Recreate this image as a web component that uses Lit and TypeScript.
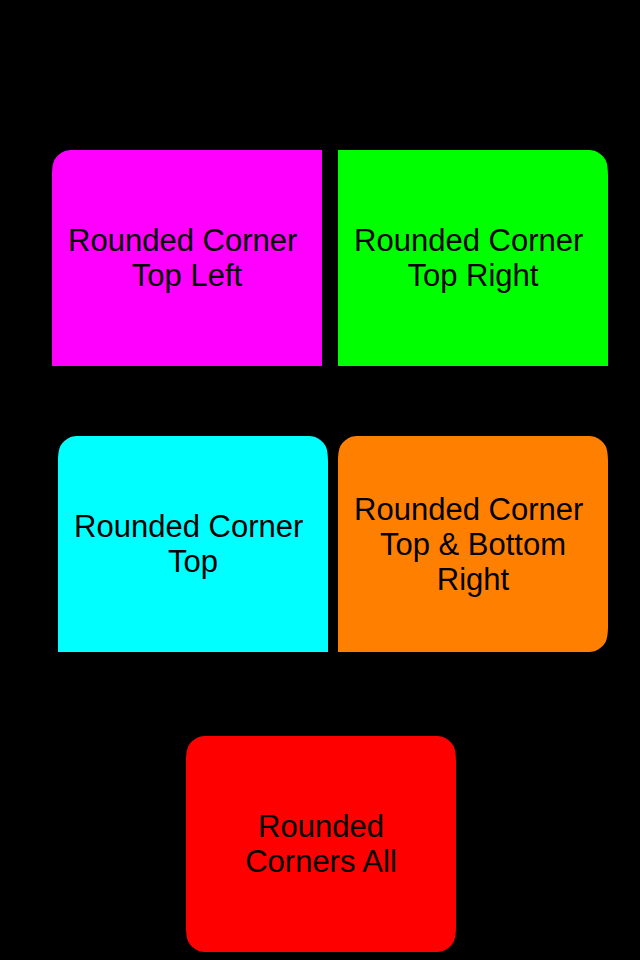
import { LitElement, html, css } from "lit";
import { customElement, property } from "lit/decorators.js";

// Clip outlines run clockwise from the left edge; each corner is either square or soft.
const softTopLeft = css`
  line to 0 26px,
  curve to 2px 11px with 0 18px / 1px 13px,
  curve to 11px 2px with 3px 8px / 8px 3px,
  curve to 26px 0 with 14px 0 / 18px 0
`;
const softTopRight = css`
  line to calc(100% - 26px) 0,
  curve to calc(100% - 11px) 2px with calc(100% - 18px) 0 / calc(100% - 14px) 0,
  curve to calc(100% - 2px) 11px with calc(100% - 8px) 3px / calc(100% - 3px) 8px,
  curve to 100% 26px with calc(100% - 1px) 13px / 100% 18px
`;
const softBottomRight = css`
  line to 100% calc(100% - 26px),
  curve to calc(100% - 2px) calc(100% - 11px) with 100% calc(100% - 18px) / calc(100% - 1px) calc(100% - 13px),
  curve to calc(100% - 11px) calc(100% - 2px) with calc(100% - 3px) calc(100% - 8px) / calc(100% - 8px) calc(100% - 3px),
  curve to calc(100% - 26px) 100% with calc(100% - 14px) 100% / calc(100% - 18px) 100%
`;
const softBottomLeft = css`
  line to 26px 100%,
  curve to 11px calc(100% - 2px) with 18px 100% / 14px 100%,
  curve to 2px calc(100% - 11px) with 8px calc(100% - 3px) / 3px calc(100% - 8px),
  curve to 0 calc(100% - 26px) with 1px calc(100% - 13px) / 0 calc(100% - 18px)
`;
const squareTopLeft = css`line to 0 0`;
const squareTopRight = css`line to 100% 0`;
const squareBottomRight = css`line to 100% 100%`;
const squareBottomLeft = css`line to 0 100%`;

@customElement("corner-card")
export class CornerCard extends LitElement {
  @property() lines = "";

  static styles = css`
    :host {
      box-sizing: border-box;
      display: flex;
      align-items: center;
      justify-content: center;
      flex: 0 1 270px;
      min-width: 0;
      aspect-ratio: 5 / 4;
    }
    .label {
      margin: 0;
      color: #000;
      font: 31px/35px "Liberation Sans", Arial, sans-serif;
      text-align: center;
      white-space: pre-line;
    }
  `;

  render() {
    return html`<p class="label">${this.lines}</p>`;
  }
}

@customElement("app-root")
export class AppRoot extends LitElement {
  static styles = css`
    :host {
      display: block;
      box-sizing: border-box;
      min-height: 100vh;
      padding: 150px 32px 8px;
      background: #000;
    }
    .row {
      display: flex;
      justify-content: flex-end;
      gap: 16px;
      margin-bottom: 70px;
    }
    .tight {
      gap: 10px;
      margin-bottom: 84px;
    }
    .centered {
      justify-content: center;
      margin-bottom: 0;
      padding-left: 2px;
    }
    .top-left {
      background: #f0f;
      clip-path: shape(from 0 50%, ${softTopLeft}, ${squareTopRight}, ${squareBottomRight}, ${squareBottomLeft}, close);
    }
    .top-right {
      background: #0f0;
      clip-path: shape(from 0 50%, ${squareTopLeft}, ${softTopRight}, ${squareBottomRight}, ${squareBottomLeft}, close);
    }
    .top {
      background: #0ff;
      clip-path: shape(from 0 50%, ${softTopLeft}, ${softTopRight}, ${squareBottomRight}, ${squareBottomLeft}, close);
    }
    .top-bottom-right {
      background: #ff8000;
      clip-path: shape(from 0 50%, ${softTopLeft}, ${softTopRight}, ${softBottomRight}, ${squareBottomLeft}, close);
    }
    .all {
      background: #f00;
      clip-path: shape(from 0 50%, ${softTopLeft}, ${softTopRight}, ${softBottomRight}, ${softBottomLeft}, close);
    }
  `;

  render() {
    return html`
      <div class="row">
        <corner-card class="top-left" .lines=${"Rounded Corner\u00a0\nTop Left"}></corner-card>
        <corner-card class="top-right" .lines=${"Rounded Corner\u00a0\nTop Right"}></corner-card>
      </div>
      <div class="row tight">
        <corner-card class="top" .lines=${"Rounded Corner\u00a0\nTop"}></corner-card>
        <corner-card class="top-bottom-right" .lines=${"Rounded Corner\u00a0\nTop & Bottom\nRight"}></corner-card>
      </div>
      <div class="row centered">
        <corner-card class="all" .lines=${"Rounded\nCorners All"}></corner-card>
      </div>
    `;
  }
}
